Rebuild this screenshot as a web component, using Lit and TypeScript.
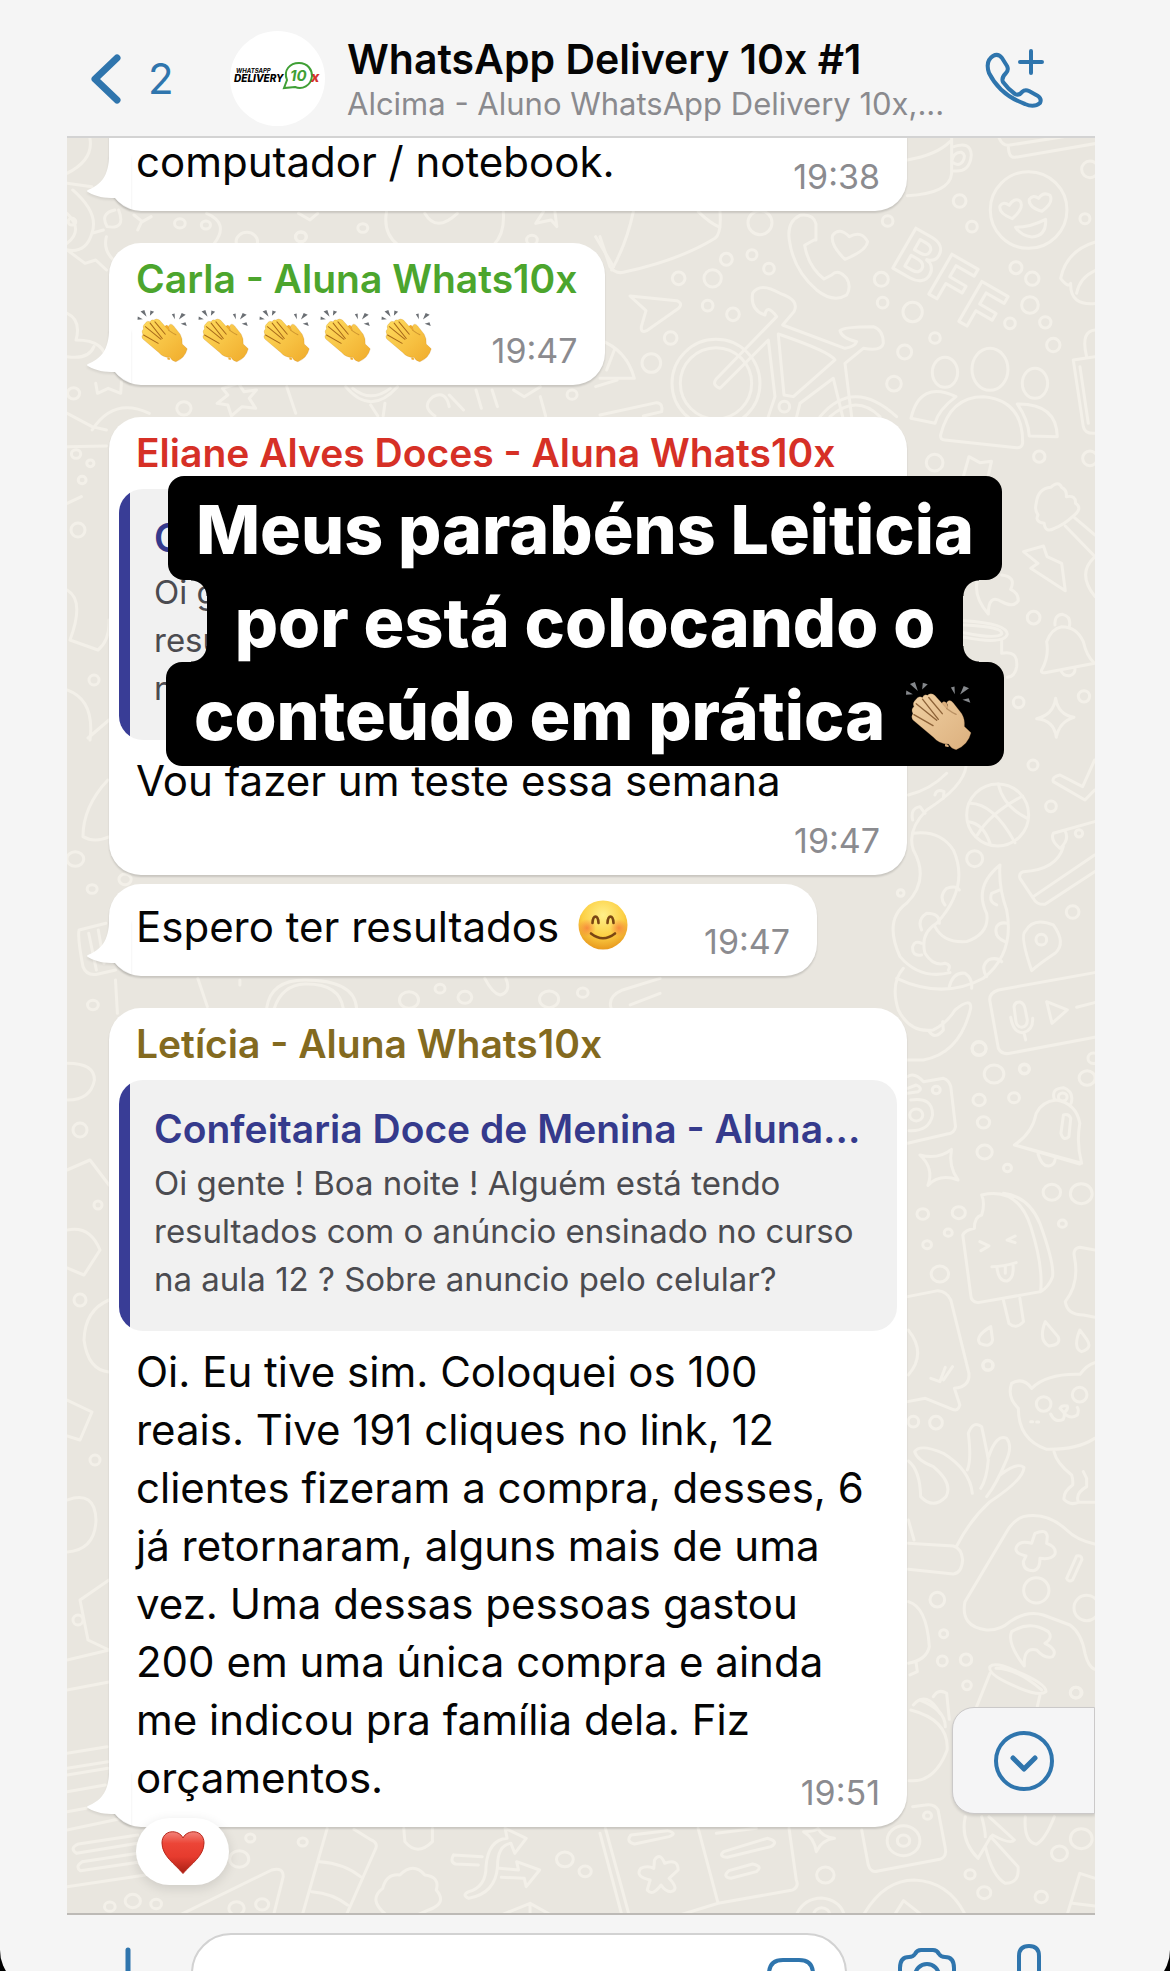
import { html, css, svg, nothing, LitElement } from "lit";
import { customElement, property } from "lit/decorators.js";
import { classMap } from "lit/directives/class-map.js";

type BubbleSize = "fit" | "medium" | "full";
type EmojiName = "clap" | "clap-light" | "smile" | "heart";

const FONT = css`Inter, "Liberation Sans", sans-serif`;

const clap = (light: string, mid: string, line: string, ray: string) => svg`
  <defs>
    <linearGradient id="skin" x1="0" y1="0" x2="1" y2="1">
      <stop offset="0" stop-color="${light}" />
      <stop offset="1" stop-color="${mid}" />
    </linearGradient>
  </defs>
  <g fill="${ray}">
    <path d="M64 371L79 365L88 392Z M101 388L103 367L118 372Z M53 391L73 402L52 404Z" />
    <path d="M188 382L199 379L200 402Z M216 403L227 377L243 384Z M223 419L242 414L247 428Z" />
  </g>
  <path fill="${mid}" d="M160 430Q166 418 176 430L184 452L170 560Q186 566 180 556L150 540Z" />
  <path fill="url(#skin)" stroke="${line}" stroke-opacity=".35" stroke-width="2"
    d="M82 418Q90 405 102 412Q106 401 117 405Q127 396 139 405L176 446Q182 440 175 428Q183 414 195 428L221 461Q231 478 229 500L249 519Q240 556 204 570Q190 568 181 553Q152 553 136 533L73 480Q66 470 73 461Q66 447 76 440Q70 428 82 418Z" />
  <g fill="none" stroke="${line}" stroke-width="4" stroke-linecap="round">
    <path d="M121 412L162 461M102 417L150 478M83 431L145 481M76 464L134 497" />
    <path d="M176 446Q192 458 204 463" stroke-opacity=".5" />
  </g>
`;

const EMOJI = {
  clap: {
    label: "👏",
    box: "46 362 206 212",
    art: clap("#ffdc5e", "#f0ab2b", "#a8691a", "#6b6f74"),
  },
  "clap-light": {
    label: "👏🏼",
    box: "46 362 206 212",
    art: clap("#f0d0a2", "#dcb07e", "#8d6238", "#85888c"),
  },
  smile: {
    label: "😊",
    box: "0 0 50 50",
    art: svg`
      <defs>
        <radialGradient id="face" cx=".5" cy=".3" r=".7">
          <stop offset="0" stop-color="#fff08a" />
          <stop offset=".6" stop-color="#fcd045" />
          <stop offset="1" stop-color="#e8991e" />
        </radialGradient>
        <radialGradient id="blush">
          <stop offset="0" stop-color="#f5763a" stop-opacity=".75" />
          <stop offset="1" stop-color="#f5763a" stop-opacity="0" />
        </radialGradient>
      </defs>
      <circle cx="25" cy="25" r="24.5" fill="url(#face)" />
      <circle cx="9" cy="28" r="9" fill="url(#blush)" />
      <circle cx="41" cy="28" r="9" fill="url(#blush)" />
      <g fill="none" stroke="#7a4613" stroke-width="2.6" stroke-linecap="round">
        <path d="M14.500 23C15 14.500 20 14.500 20.500 23" />
        <path d="M29.500 23C30 14.500 35 14.500 35.500 23" />
        <path d="M13 33.500Q25 43 37 33.500" />
      </g>`,
  },
  heart: {
    label: "❤️",
    box: "0 0 44 44",
    art: svg`
      <defs>
        <linearGradient id="red" x1="0" y1="0" x2="0" y2="1">
          <stop offset="0" stop-color="#f3837a" />
          <stop offset=".28" stop-color="#ec4537" />
          <stop offset=".6" stop-color="#e63b2e" />
          <stop offset="1" stop-color="#a81f14" />
        </linearGradient>
      </defs>
      <path fill="url(#red)" stroke="#b7271b" stroke-width="1"
        d="M22 8C18 -1 1 -1 1 13C1 26 14 34 22 43.500C30 34 43 26 43 13C43 -1 26 -1 22 8Z" />`,
  },
};

@customElement("chat-emoji")
export class ChatEmoji extends LitElement {
  static styles = css`
    :host {
      display: inline-block;
      width: 52px;
      height: 54px;
      margin-right: 9px;
      vertical-align: -12px;
    }

    svg {
      display: block;
      width: 100%;
      height: 100%;
    }
  `;

  @property() name: EmojiName = "clap";

  render() {
    const emoji = EMOJI[this.name];
    return html`<svg viewBox="${emoji.box}" role="img" aria-label="${emoji.label}">
      ${emoji.art}
    </svg>`;
  }
}

@customElement("chat-bubble")
export class ChatBubble extends LitElement {
  static styles = css`
    :host {
      display: block;
    }

    .bubble {
      position: relative;
      box-sizing: border-box;
      width: fit-content;
      max-width: 100%;
      padding: 14px 27px;
      border-radius: 32px;
      background: #fff;
      box-shadow: 0 2px 2px rgba(0, 0, 0, 0.14);
    }

    .medium {
      width: 708px;
    }

    .full {
      width: 798px;
    }

    .continued {
      border-top-left-radius: 0;
      border-top-right-radius: 0;
    }

    .tail {
      position: absolute;
      left: -22px;
      bottom: 0;
      width: 44px;
      height: 56px;
      filter: drop-shadow(0 2px 1px rgba(0, 0, 0, 0.08));
    }

    .sender {
      margin-bottom: 6px;
      font-size: 39px;
      font-weight: 600;
      line-height: 44px;
    }

    .green {
      color: #4ca52d;
    }

    .red {
      color: #d63026;
    }

    .olive {
      color: #836a20;
    }

    .quote {
      margin: 14px -17px 12px;
      padding: 27px 24px 28px 35px;
      border-radius: 24px;
      background: linear-gradient(to right, #393d96 11px, #f1f1f1 11px);
      color: #4b4b50;
      font-size: 33px;
      line-height: 48px;
      white-space: pre-line;
    }

    .quote strong {
      display: block;
      margin-bottom: 8px;
      color: #353a8c;
      font-size: 39px;
      font-weight: 600;
      line-height: 44px;
      white-space: nowrap;
    }

    .body {
      display: flow-root;
      position: relative;
      font-size: 42px;
      line-height: 58px;
      white-space: pre-line;
    }

    time {
      float: right;
      margin: 24px 0 0 50px;
      color: #8b8b8f;
      font-size: 34px;
      line-height: 40px;
    }

    .stacked time {
      margin-top: 11px;
    }
  `;

  @property() sender = "";
  @property() tone = "green";
  @property() size: BubbleSize = "fit";
  @property() time = "";
  @property() quoteTitle = "";
  @property() quoteText = "";
  @property({ type: Boolean }) tail = false;
  @property({ type: Boolean }) stacked = false;
  @property({ type: Boolean }) continued = false;

  renderQuote() {
    return html`<blockquote class="quote"><strong>${this.quoteTitle}</strong>${this.quoteText}</blockquote>`;
  }

  render() {
    const classes = {
      bubble: true,
      medium: this.size === "medium",
      full: this.size === "full",
      stacked: this.stacked,
      continued: this.continued,
    };
    return html`<article class=${classMap(classes)}>
      ${this.tail
        ? html`<svg class="tail" viewBox="0 0 44 56" aria-hidden="true">
            <path fill="#fff" d="M22 0C22 22 13 30 1 35Q-1 36 1 37C9 42 18 43 28 43Q33 49 44 54V0Z" />
          </svg>`
        : nothing}
      ${this.sender
        ? html`<div class="sender ${this.tone}">${this.sender}</div>`
        : nothing}
      ${this.quoteTitle ? this.renderQuote() : nothing}
      <div class="body"><slot></slot><time>${this.time}</time></div>
    </article>`;
  }
}

const dots = (list: number[][]) =>
  list.map(([x, y, r]) => svg`<circle cx="${x}" cy="${y}" r="${r}" />`);

const DOODLES = svg`
  <g transform="translate(600 130) scale(.3333)">
    <path d="M922 90Q1010 75 1050 35M1055 20V130Q1050 190 922 197M1055 52Q1112 30 1114 75Q1110 130 1058 122M1055 95Q1060 65 1085 67Q1100 75 1088 95Q1075 112 1055 95" />
    <path d="M1196 20Q1205 46 1225 46Q1225 84 1245 82L1490 40M1225 46L1390 20" />
    <circle cx="1286" cy="240" r="115" />
    <path d="M1237 266Q1195 250 1200 228Q1210 212 1228 226Q1242 202 1260 213Q1275 232 1237 266ZM1326 244Q1285 232 1288 208Q1300 192 1316 205Q1330 184 1350 196Q1362 218 1326 244ZM1247 292Q1290 292 1337 268Q1340 318 1296 321Q1264 318 1247 292Z" />
    <path d="M100 245Q80 340 35 420M0 320L30 410Q45 432 70 427Q240 390 345 325Q365 310 360 245M295 245Q330 280 360 292" />
    <path d="M648 330V282Q640 250 600 256Q560 275 568 330Q580 420 650 480Q700 520 740 495Q755 470 740 445Q715 415 695 435L672 447Q625 410 614 346L642 330Z" />
    <path d="M735 388Q690 345 698 316Q718 290 748 320Q785 300 803 335Q800 362 735 388Z" />
    <path d="M90 498L230 512Q250 520 236 535L140 602Q122 610 124 590L138 542Z" />
    <circle cx="348" cy="760" r="132" /><circle cx="348" cy="760" r="107" />
    <path d="M348 748L530 560Q500 520 495 555Q450 540 458 490Q480 455 540 490Q600 510 582 545L548 585L735 655Q765 650 770 635Q725 625 720 602Q730 590 820 590Q850 600 850 640Q845 665 790 655L735 700L755 860M348 748Q335 765 360 775L505 630L525 800L505 860M535 615L552 795L580 800L705 690Q690 665 535 612M590 860L600 820L700 745L728 860" />
    <circle cx="553" cy="830" r="16" />
    <path d="M660 860Q760 740 890 860M690 860Q770 790 840 860" />
    <ellipse cx="1035" cy="727" rx="38" ry="45" /><ellipse cx="1170" cy="718" rx="54" ry="63" /><ellipse cx="1305" cy="760" rx="38" ry="45" />
    <path d="M1068 800Q960 750 933 865L1005 880Q1015 840 1068 800ZM1022 915Q1050 800 1150 800Q1270 810 1268 940Q1265 955 1250 953L1035 930Q1020 930 1022 915ZM1252 822Q1370 820 1372 920L1288 918Q1285 870 1252 822Z" />
    <path d="M1490 335Q1400 360 1382 445Q1405 475 1412 460Q1410 530 1490 520M1490 420Q1440 440 1430 490M1490 600Q1440 600 1460 680M1485 680L1420 690L1450 890Q1455 912 1485 910M1440 710L1465 880" />
    <path d="M0 630Q80 660 103 745H0M45 655L20 720M0 855L170 818Q190 820 185 845L130 858" />
    <g class="letters">
      <text transform="translate(868 408) rotate(30)">B</text>
      <text transform="translate(976 486) rotate(30)">F</text>
      <text transform="translate(1066 568) rotate(30)">F</text>
    </g>
    ${dots([[1079, 213, 19], [1116, 290, 16], [863, 273, 16], [480, 278, 36], [379, 388, 18], [456, 374, 15], [507, 416, 16], [338, 445, 26], [236, 445, 19], [323, 527, 16], [399, 553, 19], [212, 624, 19], [154, 699, 28], [844, 448, 21], [848, 518, 16], [938, 546, 29], [1248, 413, 18], [1297, 446, 20], [1290, 525, 25], [1230, 580, 16], [1336, 577, 17], [1360, 645, 20], [1005, 624, 16], [914, 666, 21], [882, 761, 22], [1455, 266, 15], [1470, 118, 25], [1318, 980, 17], [1004, 998, 25], [1470, 985, 22]])}
  </g>
  <g transform="translate(600 400) scale(.3635 .3333)">
    <path d="M1000 228L1015 170L1045 188L1077 184L1068 228" />
    <path d="M1200 310Q1205 265 1240 262Q1262 240 1270 262Q1285 270 1283 290Q1310 285 1308 310Q1330 325 1300 350Q1275 375 1250 385Q1225 400 1222 370Q1195 365 1205 345Q1195 330 1200 310ZM1280 378L1362 470M1302 350L1362 405M1362 470Q1310 520 1362 590" />
    <path d="M1165 455L1220 438L1230 470L1270 490L1280 572L1185 505L1205 490Z" />
  </g>
  <g transform="translate(890 560) scale(.3333)">
    <path d="M262 62Q250 110 295 162Q295 100 335 125Q370 145 385 122Q385 98 362 88Q380 50 335 45" />
    <path d="M222 182Q350 190 352 222Q345 255 222 232M222 195Q340 200 335 222Q320 238 222 218M335 240V280M335 280Q385 270 380 320Q375 350 352 352" />
    <path d="M455 330Q478 290 470 245Q485 205 515 200Q560 200 580 245Q590 290 614 310L465 338Q452 340 455 330ZM512 330Q520 350 540 347Q556 342 555 325M495 195Q492 165 518 163Q545 170 538 200" />
    <path d="M497 415Q505 465 552 472Q508 485 499 532Q492 480 440 476Q490 465 497 415Z" />
    <path d="M614 600L578 680L510 645Q485 650 490 665L585 720L614 690M614 785L490 820Q480 840 510 865Q540 840 525 812M520 860Q500 930 400 935Q385 940 390 955L430 1015Q440 1035 465 1033L614 935M430 1010L614 885" />
    <circle cx="323" cy="765" r="93" />
    <path d="M240 730Q310 730 375 848M262 825Q300 760 398 708M325 672Q340 740 412 775M235 785Q280 790 300 850" />
    <path d="M228 620Q220 680 110 750Q50 810 70 870Q120 960 50 1030Q-20 1080 30 1190Q90 1260 180 1238M55 705Q120 690 170 640M70 820Q150 810 190 870Q240 980 140 1090M140 1090Q90 1120 105 1180Q130 1220 165 1210Q185 1215 175 1230M135 1100Q160 1150 230 1145Q300 1120 290 1060Q250 980 330 915Q325 980 350 1050Q375 1180 280 1255Q160 1320 20 1255M40 1225Q0 1270 25 1350Q60 1420 130 1410Q170 1390 195 1350Q245 1310 242 1345Q210 1480 100 1500H50" />
    <path d="M95 1110Q80 1080 110 1060Q150 1060 148 1090M165 1035Q145 1010 170 985Q200 975 208 990M320 1035Q295 1025 305 1000L330 990M345 1145Q310 1130 320 1100Q330 1085 352 1090M290 1250Q270 1220 295 1200Q320 1190 335 1205M178 1280Q190 1235 225 1240Q248 1255 245 1285M135 705Q140 685 162 695L160 715M68 780Q60 745 90 740L105 760M118 1415Q135 1440 160 1410L158 1385M95 1185Q65 1190 68 1160Q75 1140 95 1150" />
    <path d="M425 1232Q390 1130 405 1115Q430 1070 490 1095Q530 1150 495 1180Q450 1210 425 1232Z" /><circle cx="454" cy="1139" r="16" />
    <path d="M614 1238L325 1290Q295 1300 300 1325L325 1465Q335 1485 360 1480L614 1432M372 1340Q375 1325 390 1326Q402 1330 405 1345L412 1380Q412 1400 395 1402Q380 1400 378 1385ZM362 1372Q370 1420 400 1418Q430 1410 428 1375M402 1418L407 1440M470 1325L532 1350L486 1390ZM560 1342L614 1328" />
    ${dots([[431, 173, 19], [386, 427, 16], [582, 409, 17], [429, 615, 15], [483, 739, 16], [254, 896, 24], [548, 1056, 19], [32, 999, 10], [267, 1466, 21], [403, 1527, 15], [567, 820, 11], [610, 1495, 16]])}
  </g>
  <g transform="translate(600 1000) scale(.3635 .3333)">
    <path d="M846 230Q865 215 890 245L945 235Q960 240 965 260L978 380Q975 400 955 402L846 430M846 265L870 255Q890 265 875 275L846 280M855 300Q915 290 915 345Q905 395 850 392" />
    <circle cx="870" cy="345" r="18" /><circle cx="925" cy="270" r="11" />
    <path d="M967 448Q958 500 985 540Q935 520 902 556Q920 505 880 465Q930 480 967 448Z" />
    <path d="M1140 435Q1190 400 1200 340Q1215 305 1255 300Q1310 310 1320 370Q1310 430 1325 490ZM1140 435L1320 492M1205 462Q1215 500 1235 498Q1250 495 1252 478M1250 298Q1240 265 1275 263Q1305 275 1296 310M1275 345Q1290 340 1295 355L1290 410Q1275 425 1268 400Z" /><circle cx="1273" cy="291" r="12" />
    <path d="M1050 585Q1150 560 1185 680Q1220 800 1212 875L1040 908Q1020 905 1020 885L998 705Q1005 690 1030 685Q1030 650 1050 645Q1060 610 1050 585ZM1110 580Q1180 590 1210 670Q1250 790 1245 830Q1235 860 1212 875M1110 902L1125 970Q1145 990 1165 965L1155 895M1045 725L1070 738L1048 752M1142 708L1120 720L1142 728M1078 800Q1110 800 1145 788M1092 800Q1095 845 1120 843Q1140 835 1136 792M1115 800V820" />
    <path d="M1362 750L1320 742Q1300 745 1305 770Q1320 850 1280 905Q1285 945 1330 945L1362 952" />
    <path d="M1075 980Q1030 1010 1045 1030Q1075 1045 1080 1020ZM1225 965Q1205 1020 1235 1038Q1270 1035 1260 1010ZM1320 990Q1300 1045 1325 1055Q1355 1045 1340 1020Z" />
    <path d="M846 890L930 872Q955 875 965 900L1015 1120Q1018 1160 975 1165L990 1215Q985 1235 970 1228L895 1195L846 1205M848 990Q900 1060 848 1125M910 1135L935 1145L950 1102M945 1140L970 1100" />
    ${dots([[1043, 146, 19], [1084, 222, 27], [1168, 207, 13], [1043, 300, 17], [1139, 293, 15], [1055, 367, 17], [1058, 456, 21], [1121, 504, 11], [1243, 577, 24], [1324, 581, 30], [888, 642, 16], [987, 638, 18], [958, 698, 11], [900, 734, 12], [1272, 671, 11], [935, 822, 24], [1068, 1096, 14], [1340, 234, 22]])}
  </g>
  <g transform="translate(890 1360) scale(.3333)">
    <path d="M425 85Q470 40 570 43Q590 15 614 8M425 85Q400 50 365 70Q350 110 385 145Q385 240 470 268Q560 270 614 235" />
    <circle cx="461" cy="132" r="22" /><circle cx="569" cy="104" r="22" />
    <path d="M482 162Q495 190 520 178Q525 165 522 158Q540 180 562 165Q568 150 562 142M510 145Q515 135 532 138Q535 150 522 158ZM492 275Q500 310 545 345Q550 360 548 375Q520 395 522 418Q540 438 565 427H614M565 425Q555 400 590 380V355L580 335M422 185H428M440 186H446" />
    <path d="M247 400Q240 330 160 280Q90 250 74 275Q80 300 130 320Q190 370 168 410Q130 450 92 410Q90 330 55 303M232 330Q245 300 235 220Q250 180 275 200Q290 270 295 300Q290 360 272 385M296 290Q320 220 350 235Q370 260 345 310Q320 370 290 410M330 345Q380 305 402 322Q400 360 300 425Q240 480 200 558M55 550L190 558Q215 565 218 600Q215 640 190 642L55 628M55 480L72 540" />
    <path d="M614 552Q560 540 530 510Q470 455 400 470Q370 480 350 515L225 725Q210 800 290 810Q330 812 360 785Q410 750 460 765L540 795Q575 820 585 880Q595 920 614 928" />
    <path d="M435 520Q470 505 472 530L470 550Q500 560 495 582Q485 600 450 595Q450 630 430 632Q400 632 400 605L408 588Q370 580 380 560Q390 540 425 550ZM530 655L560 588Q575 585 576 598L548 660Q535 668 530 655ZM403 918Q350 850 365 815Q420 780 475 815Q490 835 465 850Q505 870 488 890Q465 898 440 870Q400 860 403 918Z" />
    <circle cx="439" cy="691" r="38" /><circle cx="590" cy="744" r="38" />
    <path d="M300 920Q315 905 370 930Q470 970 468 995Q450 1010 390 985Q290 945 300 920ZM318 925Q380 925 455 990M300 940L260 1040M450 1005L442 1040M55 725Q110 740 118 860Q110 900 55 910M78 905L82 935L60 945M70 1035Q110 990 150 1060M130 1010Q145 985 170 1000L178 1078" />
    ${dots([[138, 188, 19], [70, 185, 16], [293, 16, 15], [142, 719, 22], [161, 821, 12], [157, 903, 15], [228, 899, 17], [231, 976, 13], [557, 998, 16]])}
  </g>
  <g transform="translate(600 1660) scale(.3635 .3333)">
    <path d="M855 150Q960 180 955 270Q920 370 850 362M880 120Q950 150 950 200M0 520L60 765M15 505L80 765M85 525L185 512Q215 520 190 530L95 552Q70 545 85 525ZM270 505L325 730L530 690Q548 680 540 660L520 505M325 730L220 765M340 575L460 535Q495 545 470 560L350 592Q325 590 340 575ZM355 632L420 612Q450 620 430 635L360 655Q335 650 355 632ZM320 520L430 505" />
    <path d="M150 600Q165 575 178 610Q215 595 215 630L190 655Q220 690 195 695Q180 695 168 675Q145 710 130 690L138 660Q95 650 112 625Q130 615 148 625Z" />
    <path d="M560 515Q595 515 600 505Q610 530 645 535Q610 540 595 575Q590 535 560 515ZM720 510L738 615Q745 640 765 633L935 598Q955 590 950 565L930 450Q920 430 895 435L860 440" />
    <circle cx="835" cy="542" r="45" /><circle cx="835" cy="542" r="17" /><circle cx="901" cy="467" r="11" />
    <path d="M725 765Q780 660 865 660Q960 665 1005 765M810 765L835 722L885 765M540 765Q560 715 610 714Q660 720 672 765M1005 470Q990 540 1040 595L1075 530L1150 620Q1155 670 1115 670Q1080 650 1060 560M1050 470Q1060 510 1060 530M1070 470L1140 540Q1130 555 1080 525M1170 470Q1165 545 1200 553Q1225 540 1250 470M1285 765L1320 640L1362 655M1300 730L1362 738" />
    ${dots([[620, 645, 24], [1018, 643, 14], [1057, 698, 18], [1214, 711, 17], [1264, 580, 22], [1324, 536, 30], [1310, 98, 16], [610, 765, 22]])}
  </g>
  <g transform="translate(0 1740) scale(.3827 .3333)">
    <path d="M175 40L280 20M175 85L282 65M175 105L282 85M175 155L275 135M175 215L225 205M175 270L320 235M205 312L360 285M200 340L360 310M205 312Q180 325 200 340M215 365L360 340M210 392L370 365M215 365Q195 380 210 392M175 440L380 405" />
    <path d="M470 525L710 390Q740 380 740 410L715 525M855 265L790 525M905 525L980 330Q990 310 970 300L925 268M835 365Q900 370 942 410M815 455Q870 460 908 495M1010 525Q960 480 1000 445Q1010 400 1045 405Q1080 365 1110 405Q1150 410 1140 450Q1170 490 1120 510L1090 525M1055 265L1058 305Q1090 350 1130 305V265M1185 345L1260 350M1190 372L1250 375M1185 345Q1175 365 1190 372M1225 455Q1270 440 1270 380Q1275 300 1325 295L1320 265L1375 295L1345 340L1335 310Q1300 315 1300 380Q1295 460 1225 475Q1205 465 1225 455ZM1305 385L1355 390L1350 365L1410 390L1375 440L1370 415L1310 412M1310 525L1385 490L1440 525M1385 490V525" />
    ${dots([[654, 294, 12], [791, 306, 12], [625, 357, 25], [347, 483, 20], [287, 500, 14], [408, 492, 14], [618, 505, 20], [685, 493, 17], [1476, 358, 22], [1529, 394, 16]])}
  </g>
  <g transform="scale(.3827 .3333)">
    <path d="M235 415Q245 480 175 520M175 550L240 560M190 570Q260 640 240 700Q225 760 175 750M175 640Q220 690 175 730M240 700L270 690M300 630Q260 640 280 680Q330 690 310 630M350 645L372 665L395 650M370 665L360 690M540 640Q600 670 560 730M1010 635Q1000 700 1040 735M1315 635Q1320 700 1290 735M1110 640Q1140 700 1195 640M780 640L810 660L830 640M1400 670L1420 635M1400 670L1440 660L1455 680L1450 635" />
    ${dots([[470, 670, 14], [538, 675, 12], [948, 684, 13], [786, 711, 14], [645, 725, 28], [188, 665, 10], [1390, 720, 14]])}
  </g>
  <g transform="translate(60 230) scale(.3571 .3333)">
    <path d="M130 20Q120 60 150 90M20 60L70 100L100 90L130 120M20 250Q60 270 45 330Q130 330 130 400M20 380Q80 390 95 350M100 460L105 490L135 475L170 490L172 455M455 475L470 495L440 520L470 525L480 558L510 530L548 535L530 505L550 480L515 485L500 460ZM635 470L660 550M820 475Q870 520 925 475M800 470Q870 560 945 470M870 525L890 558M910 520L905 558M1050 558Q1010 530 1045 500Q1080 480 1090 530M1090 495L1130 540M1165 480L1180 535M1210 480L1225 530M1270 480L1300 500L1345 470M1345 500L1360 558M1500 470L1560 450M20 550L90 590L130 600M90 600Q150 500 250 550M20 650L130 648M20 820L60 800M1500 20L1550 110" />
    ${dots([[38, 490, 17], [347, 535, 20], [1434, 494, 14], [675, 20, 15], [45, 672, 13], [85, 700, 10], [62, 750, 11]])}
  </g>
  <g transform="translate(60 780) scale(.3827 .3333)">
    <path d="M125 0Q60 80 60 170Q90 190 130 170M50 450L120 430M50 450Q45 470 60 560Q70 590 100 582L145 570M75 460L95 570M100 450L115 550M145 600L150 700M360 595L385 680M540 685Q550 600 640 600Q770 600 775 685M560 685Q580 615 640 612Q730 610 740 685M1110 595Q1130 640 1150 645Q1180 635 1165 595M1440 685Q1430 650 1470 630L1568 595M1490 675L1568 640M20 850Q90 850 90 900Q80 960 20 960M470 600V615" />
    ${dots([[40, 237, 22], [84, 327, 13], [86, 675, 14], [170, 298, 16], [912, 660, 25], [993, 626, 13], [1058, 652, 18], [1278, 658, 25], [1366, 638, 14]])}
  </g>
  <g>
    <path d="M67 590Q85 600 70 640L98 650Q110 640 109 620M67 690Q95 700 90 740M109 720L88 738M67 1170L90 1160L109 1185M67 1230Q90 1225 100 1250L84 1275L67 1268M109 1300Q85 1310 84 1340Q88 1370 109 1372M67 1400L92 1412L80 1440L67 1436M67 1500Q95 1490 96 1520Q95 1550 67 1552M109 1580L80 1600L88 1640L109 1650M67 1660L109 1650M67 1690L109 1682" />
    ${dots([[80, 1300, 6], [95, 1460, 5], [80, 1130, 7], [98, 1205, 4], [78, 1620, 5], [78, 530, 7], [94, 680, 5]])}
  </g>
`;

@customElement("app-root")
export class AppRoot extends LitElement {
  static styles = css`
    :host {
      display: block;
      position: relative;
      height: 100vh;
      overflow: hidden;
      background: #000;
      color: #050505;
      font-family: ${FONT};
    }

    .screen {
      padding: 0 75px 0 67px;
      border-radius: 0 0 40px 40px;
      background: #f5f5f5;
    }

    header {
      display: flex;
      align-items: center;
      box-sizing: border-box;
      height: 138px;
      padding: 21px 50px 0 24px;
      border-bottom: 2px solid #d3d3d3;
    }

    button {
      display: block;
      flex: none;
      padding: 0;
      border: 0;
      background: none;
      color: #2f75ad;
      font: inherit;
    }

    button svg,
    .avatar svg {
      display: block;
    }

    .icon {
      fill: none;
      stroke: currentColor;
      stroke-width: 5;
      stroke-linecap: round;
      stroke-linejoin: round;
    }

    .back {
      display: flex;
      align-items: center;
      gap: 27px;
      width: 139px;
      font-size: 42px;
    }

    .avatar {
      flex: none;
      width: 95px;
      height: 95px;
      border-radius: 50%;
      background: #fff;
    }

    .group {
      flex: 1;
      min-width: 0;
      margin-left: 22px;
    }

    h1,
    p {
      margin: 0;
      white-space: nowrap;
    }

    h1 {
      font-size: 41px;
      font-weight: 600;
      line-height: 49px;
    }

    .group p {
      color: #8a8a8e;
      font-size: 31px;
      line-height: 39px;
    }

    main {
      position: relative;
      overflow: hidden;
      border-bottom: 2px solid #bdbab6;
      background: #e9e6df;
    }

    .wallpaper {
      position: absolute;
      top: 0;
      left: 0;
      width: 100%;
      height: 100%;
      fill: none;
      stroke: #f3f0e9;
      stroke-width: 3;
      stroke-linejoin: round;
      stroke-linecap: round;
    }

    .wallpaper * {
      vector-effect: non-scaling-stroke;
    }

    .letters text {
      font-size: 190px;
      font-weight: 700;
    }

    .thread {
      display: flex;
      flex-direction: column;
      gap: 32px;
      position: relative;
      margin-top: -19px;
      padding: 0 42px 86px;
    }

    .pair {
      display: flex;
      flex-direction: column;
      gap: 9px;
    }

    .reacted {
      position: relative;
    }

    .reaction {
      display: flex;
      align-items: center;
      justify-content: center;
      position: absolute;
      left: 27px;
      bottom: -58px;
      width: 93px;
      height: 67px;
      border-radius: 34px;
      background: #fff;
      box-shadow: 0 3px 12px rgba(0, 0, 0, 0.12);
    }

    .reaction chat-emoji {
      width: 44px;
      height: 44px;
      margin: 0;
    }

    .thread .smile {
      width: 50px;
      height: 50px;
      margin: 0 0 0 7px;
      vertical-align: -8px;
    }

    .jump {
      display: flex;
      align-items: center;
      position: absolute;
      right: 0;
      bottom: 99px;
      width: 143px;
      height: 107px;
      padding-left: 40px;
      border: 1px solid #cbc9c9;
      border-radius: 22px 0 0 22px;
      background: #f5f5f6;
      box-shadow: 0 2px 3px rgba(0, 0, 0, 0.12);
    }

    footer {
      display: flex;
      align-items: flex-start;
      box-sizing: border-box;
      height: 75px;
      padding: 18px 44px 0 37px;
      overflow: hidden;
    }

    footer > button {
      margin-top: 11px;
    }

    .field {
      display: flex;
      flex: 1;
      box-sizing: border-box;
      min-width: 0;
      height: 86px;
      margin: 0 50px 0 41px;
      padding: 14px 30px 0;
      border: 2px solid #d2d2d2;
      border-radius: 40px;
      background: #fff;
    }

    .field input {
      flex: 1;
      min-width: 0;
      height: 50px;
      padding: 0;
      border: 0;
      outline: 0;
      background: none;
      font: inherit;
      font-size: 42px;
    }

    footer .mic {
      margin-left: 50px;
    }

    .caption {
      display: flex;
      flex-direction: column;
      align-items: center;
      position: absolute;
      top: 476px;
      left: 0;
      right: 0;
      color: #fff;
      font-size: 68px;
      font-weight: 800;
      line-height: 101px;
    }

    .caption span {
      display: flex;
      align-items: center;
      position: relative;
      padding: 3px 28px 0;
      border-radius: 16px;
      background: #000;
      white-space: pre;
    }

    .caption .inner {
      border-radius: 0;
      line-height: 79px;
    }

    .inner::before,
    .inner::after {
      content: "";
      position: absolute;
      top: 0;
      bottom: 0;
      width: 16px;
      background:
        radial-gradient(circle at 0 16px, transparent 15px, #000 16px) top / 16px 16px no-repeat,
        radial-gradient(circle at 0 0, transparent 15px, #000 16px) bottom / 16px 16px no-repeat;
    }

    .inner::before {
      right: 100%;
    }

    .inner::after {
      left: 100%;
      transform: scaleX(-1);
    }

    .caption chat-emoji {
      width: 68px;
      height: 70px;
      margin: 0 4px;
    }
  `;

  renderHeader() {
    return html`<header>
      <button class="back" aria-label="Voltar">
        <svg class="icon" width="30" height="50" viewBox="0 0 30 50">
          <path stroke-width="7" d="M26 4L4 25L26 46" />
        </svg>
        2
      </button>
      <div class="avatar">
        <svg width="95" height="95" viewBox="230 31 95 95" font-style="italic" font-weight="800">
          <text x="236" y="73" font-size="6" font-weight="700">WHATSAPP</text>
          <text x="234" y="82" font-size="10">DELIVERY</text>
          <path fill="#fff" stroke="#3f9f35" stroke-width="2" d="M284 88L287 80C283 70 290 63 299 63C308 63 312 70 312 76C311 86 302 90 295 87Z" />
          <text x="290" y="81" font-size="15" font-weight="700" fill="#3f9f35">10</text>
          <text x="311" y="82" font-size="14" fill="#d6322c">x</text>
        </svg>
      </div>
      <div class="group">
        <h1>WhatsApp Delivery 10x #1</h1>
        <p>Alcima - Aluno WhatsApp Delivery 10x,...</p>
      </div>
      <button aria-label="Ligar">
        <svg class="icon" width="60" height="60" viewBox="985 47 60 60">
          <path stroke-width="4" d="M993 55Q998 52 1002 57L1007 65Q1009 69 1006 72Q1001 77 1003 81Q1008 88 1015 93Q1019 95 1022 91Q1025 88 1029 90L1038 95Q1042 98 1040 102Q1034 107 1025 103Q1000 94 989 72Q985 60 993 55Z" transform="translate(0 -1)" />
          <path stroke-width="4" d="M1031 49V71M1020 60H1042" />
        </svg>
      </button>
    </header>`;
  }

  renderThread() {
    return html`<div class="thread">
      <chat-bubble size="full" time="19:38" tail continued>computador / notebook.</chat-bubble>
      <chat-bubble sender="Carla - Aluna Whats10x" time="19:47" tail
        >${[1, 2, 3, 4, 5].map(() => html`<chat-emoji name="clap"></chat-emoji>`)}</chat-bubble
      >
      <div class="pair">
        <chat-bubble
          size="full"
          sender="Eliane Alves Doces - Aluna Whats10x"
          tone="red"
          time="19:47"
          .quoteTitle=${"Confeitaria Doce de Menina - Aluna..."}
          .quoteText=${QUOTE}
          stacked
          >Vou fazer um teste essa semana</chat-bubble
        >
        <chat-bubble size="medium" time="19:47" tail
          >Espero ter resultados <chat-emoji class="smile" name="smile"></chat-emoji
        ></chat-bubble>
      </div>
      <div class="reacted">
        <chat-bubble
          size="full"
          sender="Letícia - Aluna Whats10x"
          tone="olive"
          time="19:51"
          .quoteTitle=${"Confeitaria Doce de Menina - Aluna..."}
          .quoteText=${QUOTE}
          tail
          >${ANSWER}</chat-bubble
        >
        <div class="reaction"><chat-emoji name="heart"></chat-emoji></div>
      </div>
    </div>`;
  }

  renderFooter() {
    return html`<footer>
      <button aria-label="Anexar">
        <svg class="icon" width="46" height="60" viewBox="0 0 46 60">
          <path d="M24 6V56M3 32H45" />
        </svg>
      </button>
      <div class="field">
        <input type="text" aria-label="Mensagem" />
        <button aria-label="Figurinhas">
          <svg class="icon" width="48" height="50" viewBox="0 0 48 50">
            <path stroke-width="4" d="M28 46H16Q2 46 2 32V16Q2 2 16 2H32Q46 2 46 16V28Q46 32 42 36L34 43Q31 46 28 46Z" />
          </svg>
        </button>
      </div>
      <button aria-label="Câmera">
        <svg class="icon" width="60" height="56" viewBox="0 0 60 56">
          <path stroke-width="4" d="M3 24Q3 13 12 13Q16 13 18 10Q20 6 24 6H36Q40 6 42 10Q44 13 48 13Q57 13 57 24V44Q57 52 49 52H11Q3 52 3 44Z" />
          <circle stroke-width="4" cx="30" cy="32" r="12" />
        </svg>
      </button>
      <button class="mic" aria-label="Gravar áudio">
        <svg class="icon" width="44" height="56" viewBox="0 0 44 56">
          <path stroke-width="4" d="M12 12Q12 2 22 2Q32 2 32 12V34Q32 44 22 44Q12 44 12 34Z" />
          <path stroke-width="4" d="M4 34Q4 52 22 52Q40 52 40 34" />
        </svg>
      </button>
    </footer>`;
  }

  render() {
    return html`
      <div class="screen">
        ${this.renderHeader()}
        <main>
          <svg class="wallpaper" viewBox="67 138 1028 1776" preserveAspectRatio="xMaxYMin slice" aria-hidden="true">
            ${DOODLES}
          </svg>
          ${this.renderThread()}
          <button class="jump" aria-label="Ir para o fim">
            <svg class="icon" width="62" height="62" viewBox="0 0 62 62">
              <circle stroke-width="4" cx="31" cy="31" r="28" />
              <path d="M20 28L31 39L42 28" />
            </svg>
          </button>
        </main>
        ${this.renderFooter()}
      </div>
      <div class="caption">
        <span>Meus parabéns Leiticia</span>
        <span class="inner">por está colocando o</span>
        <span>conteúdo em prática <chat-emoji name="clap-light"></chat-emoji></span>
      </div>
    `;
  }
}

const QUOTE = `Oi gente ! Boa noite ! Alguém está tendo
resultados com o anúncio ensinado no curso
na aula 12 ? Sobre anuncio pelo celular?`;

const ANSWER = `Oi. Eu tive sim. Coloquei os 100
reais. Tive 191 cliques no link, 12
clientes fizeram a compra, desses, 6
já retornaram, alguns mais de uma
vez. Uma dessas pessoas gastou
200 em uma única compra e ainda
me indicou pra família dela. Fiz
orçamentos.`;
